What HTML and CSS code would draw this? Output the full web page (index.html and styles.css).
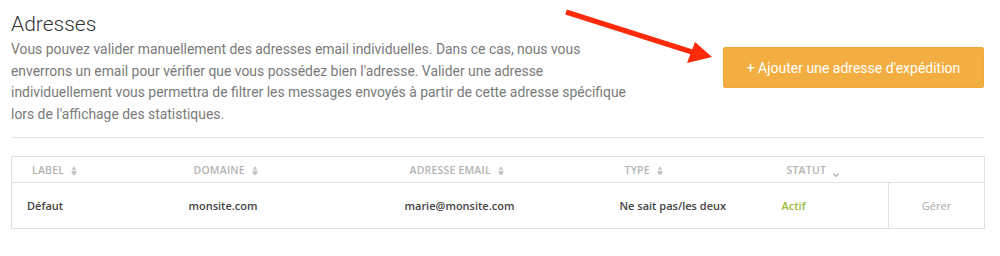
FILE: index.html
```html
<!DOCTYPE html>
<html lang="fr">
<head>
<meta charset="utf-8">
<title>Adresses</title>
<link rel="stylesheet" href="styles.css">
</head>
<body>
<div class="page">
  <div class="intro">
    <div class="intro-text">
      <h1 class="title">Adresses</h1>
      <p class="desc">Vous pouvez valider manuellement des adresses email individuelles. Dans ce cas, nous vous enverrons un email pour vérifier que vous possédez bien l'adresse. Valider une adresse individuellement vous permettra de filtrer les messages envoyés à partir de cette adresse spécifique lors de l'affichage des statistiques.</p>
    </div>
    <button class="btn-add">+ Ajouter une adresse d'expédition</button>
  </div>
  <hr class="divider">
  <table class="grid">
    <colgroup>
      <col class="c1"><col class="c2"><col class="c3"><col class="c4"><col class="c5"><col class="c6">
    </colgroup>
    <thead>
      <tr>
        <th>Label <svg class="sort" viewBox="0 0 6 9"><path d="M3 0 L5.2 3.8 L0.8 3.8 Z M0.6 4.8 L5.4 4.8 C5.7 7.4 4.5 9 3 9 C1.5 9 0.3 7.4 0.6 4.8 Z"/></svg></th>
        <th>Domaine <svg class="sort" viewBox="0 0 6 9"><path d="M3 0 L5.2 3.8 L0.8 3.8 Z M0.6 4.8 L5.4 4.8 C5.7 7.4 4.5 9 3 9 C1.5 9 0.3 7.4 0.6 4.8 Z"/></svg></th>
        <th>Adresse email <svg class="sort" viewBox="0 0 6 9"><path d="M3 0 L5.2 3.8 L0.8 3.8 Z M0.6 4.8 L5.4 4.8 C5.7 7.4 4.5 9 3 9 C1.5 9 0.3 7.4 0.6 4.8 Z"/></svg></th>
        <th>Type <svg class="sort" viewBox="0 0 6 9"><path d="M3 0 L5.2 3.8 L0.8 3.8 Z M0.6 4.8 L5.4 4.8 C5.7 7.4 4.5 9 3 9 C1.5 9 0.3 7.4 0.6 4.8 Z"/></svg></th>
        <th>Statut <svg class="caret" viewBox="0 0 6 3"><path d="M0 0 L3 3 L6 0" fill="none" stroke-width="1.2"/></svg></th>
        <th></th>
      </tr>
    </thead>
    <tbody>
      <tr>
        <td>Défaut</td>
        <td>monsite.com</td>
        <td>marie@monsite.com</td>
        <td>Ne sait pas/les deux</td>
        <td class="status">Actif</td>
        <td class="manage">Gérer</td>
      </tr>
    </tbody>
  </table>
  <svg class="annot-arrow" width="160" height="70" viewBox="0 0 160 70">
    <path d="M6 12 L132 52" stroke="#ff2a0a" stroke-width="5.5" stroke-linecap="butt"/>
    <path d="M152 57 L135 42 L127 63 Z" fill="#ff2a0a"/>
  </svg>
</div>
</body>
</html>
```

FILE: styles.css
```css
html, body {
  margin: 0;
  padding: 0;
  background: #ffffff;
}

.page {
  position: relative;
  padding: 10px 16px 0 11px;
  font-family: Roboto, "Liberation Sans", sans-serif;
}

.intro {
  display: flex;
  align-items: flex-start;
  justify-content: space-between;
}

.intro-text {
  width: 632px;
}

.title {
  margin: 0;
  font-size: 21px;
  line-height: 28px;
  font-weight: 300;
  color: #333333;
}

.desc {
  margin: 1px 0 0 0;
  font-size: 13.9px;
  line-height: 21.5px;
  color: #7a7a7a;
}

.btn-add {
  margin-top: 37px;
  width: 261px;
  height: 41px;
  border: 1px solid #f0a93a;
  border-radius: 2px;
  background: #f3ae42;
  color: #ffffff;
  font-family: Roboto, "Liberation Sans", sans-serif;
  font-size: 14px;
  padding: 0;
  cursor: pointer;
}

.divider {
  margin: 12px 0 0 0;
  border: 0;
  border-top: 1px solid #e3e3e3;
}

.grid {
  margin-top: 18px;
  width: 973px;
  border-collapse: collapse;
  table-layout: fixed;
  border: 1px solid #e0e0e0;
  font-family: "Open Sans", "DejaVu Sans", sans-serif;
}

.c1 { width: 162px; }
.c2 { width: 216px; }
.c3 { width: 215px; }
.c4 { width: 162px; }
.c5 { width: 122px; }
.c6 { width: 96px; }

.grid th {
  height: 25px;
  padding: 0 0 0 20px;
  text-align: left;
  font-size: 10.5px;
  font-weight: 600;
  letter-spacing: 0.2px;
  text-transform: uppercase;
  color: #b3b3b3;
  border-bottom: 1px solid #e0e0e0;
  white-space: nowrap;
}

.sort {
  width: 6px;
  height: 9px;
  margin-left: 4px;
  fill: #c4c4c4;
  vertical-align: -1px;
}

.caret {
  width: 6px;
  height: 4px;
  margin-left: 4px;
  stroke: #b3b3b3;
  vertical-align: -3px;
}

.grid td {
  height: 45px;
  padding: 0 0 0 15px;
  font-size: 11px;
  font-weight: 600;
  color: #444444;
  white-space: nowrap;
}

.grid td.status {
  color: #9bbb3a;
}

.grid td.manage {
  padding: 0;
  text-align: center;
  font-weight: 400;
  color: #a8a8a8;
  border-left: 1px solid #e0e0e0;
}

.annot-arrow {
  position: absolute;
  left: 560px;
  top: 0;
}
```
